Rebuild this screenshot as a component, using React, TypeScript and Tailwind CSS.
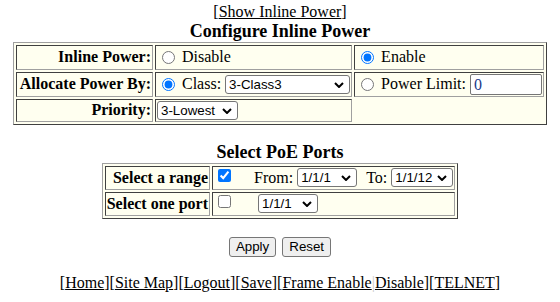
import React from 'react'

const serif = "font-['Liberation_Serif','Times_New_Roman',serif]"
const sans = "font-['Liberation_Sans',Arial,sans-serif]"

const outer =
  'border-separate border-spacing-[2px] border border-t-[#a0a0a0] border-l-[#a0a0a0] border-b-[#404040] border-r-[#404040] bg-[#fffff0]'
const cell =
  'border border-t-[#404040] border-l-[#404040] border-b-[#a0a0a0] border-r-[#a0a0a0] p-[1px] bg-[#fffff0] align-middle whitespace-nowrap'

function Select({ value, width }: { value: string; width: string }) {
  return (
    <span className="relative inline-block shrink-0">
      <select
        defaultValue={value}
        className={`${sans} ${width} h-[19px] block appearance-none border border-[#767676] rounded-[3px] bg-white pl-[3px] text-[13.33px] leading-[17px] text-black`}
      >
        <option>{value}</option>
      </select>
      <svg
        className="absolute right-[6px] top-[7px] pointer-events-none"
        width="10"
        height="6"
        viewBox="0 0 10 6"
      >
        <path d="M1 1l4 4 4-4" fill="none" stroke="#000" strokeWidth="2" />
      </svg>
    </span>
  )
}

function Radio({ name, checked }: { name: string; checked?: boolean }) {
  return (
    <input
      type="radio"
      name={name}
      defaultChecked={checked}
      className="ml-[5px] mr-[7px] w-[13px] h-[13px] shrink-0"
    />
  )
}

function Check({ checked }: { checked?: boolean }) {
  return (
    <input
      type="checkbox"
      defaultChecked={checked}
      className="ml-[4px] mr-[3px] mb-[4px] w-[13px] h-[13px] shrink-0"
    />
  )
}

function Btn({ label }: { label: string }) {
  return (
    <button
      className={`${sans} text-[13.33px] leading-[16px] text-black bg-[#efefef] border border-[#767676] rounded-[3px] px-[6px] py-[1px]`}
    >
      {label}
    </button>
  )
}

export default function App() {
  return (
    <div className={`${serif} text-[16px] leading-[18.4px] text-black bg-white w-[560px] h-[302px] pt-[3px] text-center`}>
      <div>
        [<a className="underline">Show Inline Power</a>]
      </div>
      <div className="font-bold text-[18px] leading-[20.7px]">Configure Inline Power</div>

      <table className={`${outer} mx-auto w-[534px] text-left`}>
        <tbody>
          <tr>
            <td className={`${cell} w-[137px] font-bold`}>
              <div className="h-[21px] flex items-center justify-end">Inline Power:</div>
            </td>
            <td className={`${cell} w-[197px]`}>
              <div className="h-[21px] flex items-center">
                <Radio name="p" /> Disable
              </div>
            </td>
            <td className={`${cell}`}>
              <div className="h-[21px] flex items-center">
                <Radio name="p" checked /> Enable
              </div>
            </td>
          </tr>
          <tr>
            <td className={`${cell} font-bold`}>
              <div className="h-[21px] flex items-center justify-end">Allocate Power By:</div>
            </td>
            <td className={`${cell}`}>
              <div className="h-[21px] flex items-center">
                <Radio name="a" checked />
                <span className="mr-[4px]">Class:</span>
                <Select value="3-Class3" width="w-[125px]" />
              </div>
            </td>
            <td className={`${cell}`}>
              <div className="h-[21px] flex items-center">
                <Radio name="a" />
                <span className="mr-[4px]">Power Limit:</span>
                <input
                  defaultValue="0"
                  className={`${serif} w-[72px] h-[21px] border border-[#767676] rounded-[2px] bg-white px-[3px] text-[16px] text-[#1a3a8a]`}
                />
              </div>
            </td>
          </tr>
          <tr>
            <td className={`${cell} font-bold`}>
              <div className="h-[19px] flex items-center justify-end">Priority:</div>
            </td>
            <td className={`${cell}`}>
              <div className="h-[19px] flex items-center">
                <Select value="3-Lowest" width="w-[81px]" />
              </div>
            </td>
            <td className="p-[1px]"></td>
          </tr>
        </tbody>
      </table>

      <div className="font-bold text-[18px] leading-[20.7px] mt-[17px]">Select PoE Ports</div>

      <table className={`${outer} mx-auto w-[356px] text-left`}>
        <tbody>
          <tr>
            <td className={`${cell} w-[104px] font-bold`}>
              <div className="h-[20px] flex items-center justify-end">Select a range</div>
            </td>
            <td className={`${cell}`}>
              <div className="h-[20px] flex items-center">
                <Check checked />
                <span className="ml-[20px] mr-[4px]">From:</span>
                <Select value="1/1/1" width="w-[60px]" />
                <span className="ml-[9px] mr-[4px]">To:</span>
                <Select value="1/1/12" width="w-[62px]" />
              </div>
            </td>
          </tr>
          <tr>
            <td className={`${cell} font-bold`}>
              <div className="h-[20px] flex items-center justify-end">Select one port</div>
            </td>
            <td className={`${cell}`}>
              <div className="h-[20px] flex items-center">
                <Check />
                <span className="ml-[24px]"></span>
                <Select value="1/1/1" width="w-[60px]" />
              </div>
            </td>
          </tr>
        </tbody>
      </table>

      <div className="mt-[18px] flex justify-center gap-[6px]">
        <Btn label="Apply" />
        <Btn label="Reset" />
      </div>

      <div className="mt-[17px]">
        [<a className="underline">Home</a>][<a className="underline">Site Map</a>][
        <a className="underline">Logout</a>][<a className="underline">Save</a>][
        <a className="underline">Frame Enable</a>
        <span className="text-[#c8c8c8]">|</span>
        <a className="underline">Disable</a>][<a className="underline">TELNET</a>]
      </div>
    </div>
  )
}
